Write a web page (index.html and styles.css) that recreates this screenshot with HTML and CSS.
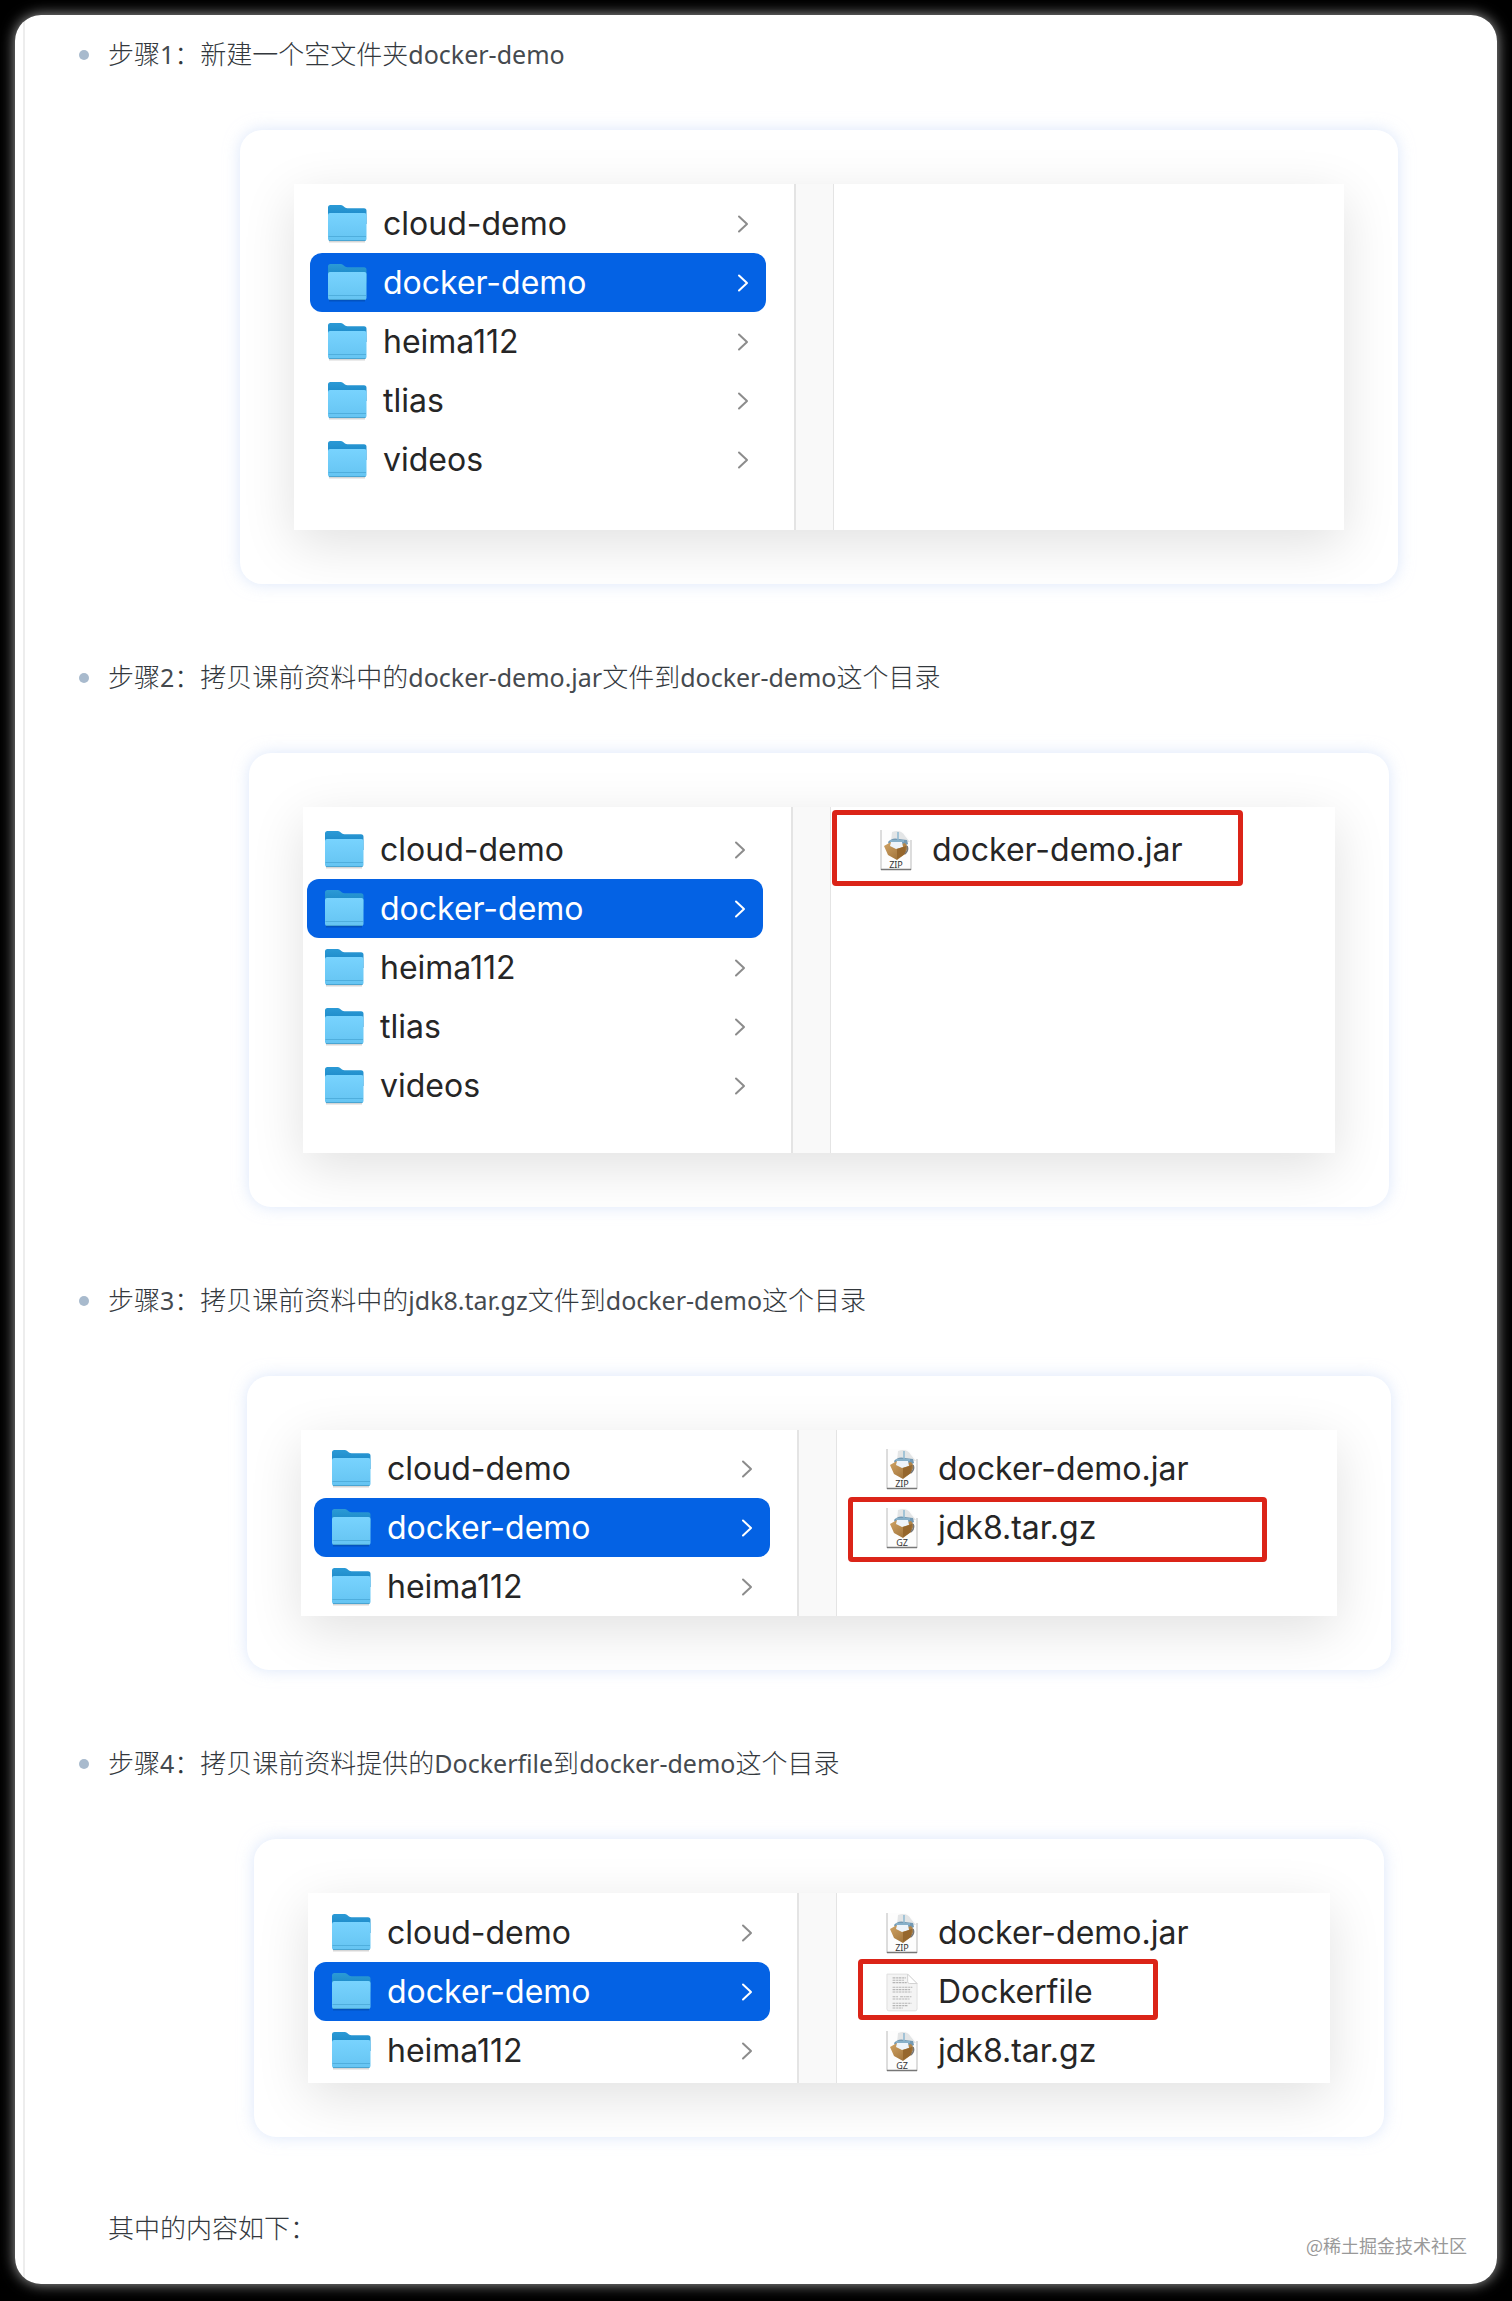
FILE: index.html
```html
<!DOCTYPE html>
<html lang="zh-CN">
<head>
<meta charset="utf-8">
<meta name="viewport" content="width=device-width, initial-scale=1">
<title>构建 docker-demo 镜像</title>
<link rel="stylesheet" href="styles.css">
</head>
<body>
<svg class="sprite" aria-hidden="true">
  <defs>
    <linearGradient id="front" x1="0" y1="0" x2="0" y2="1">
      <stop offset="0" stop-color="#78d3fe"/>
      <stop offset="1" stop-color="#65c4f2"/>
    </linearGradient>
    <linearGradient id="back" x1="0" y1="0" x2="0" y2="1">
      <stop offset="0" stop-color="#2b9ad6"/>
      <stop offset="1" stop-color="#1480c0"/>
    </linearGradient>
    <linearGradient id="box" x1="0" y1="0" x2="1" y2="1">
      <stop offset="0" stop-color="#d1a465"/>
      <stop offset="1" stop-color="#94672f"/>
    </linearGradient>
  </defs>
  <symbol id="folder" viewBox="0 0 40 40">
    <path d="M2 36h36v2.500H2z" fill="#000" opacity=".16"/>
    <path d="M1 3.500Q1 1 3.500 1h10q1.500 0 3 1.300l1.500 1.200q1 .8 2.500.8H37q2.500 0 2.500 2.500V20H1z" fill="url(#back)"/>
    <path d="M1 11q0-2 2-2h34.500q2 0 2 2v23.500q0 2.500-2.500 2.500H3.500Q1 37 1 34.500z" fill="url(#front)"/>
    <path d="M1.500 32.500h37.500" stroke="#4faedd" stroke-width="1"/>
    <path d="M2 36.500h36.500" stroke="#4aa5d2" stroke-width="1"/>
  </symbol>
  <symbol id="archive" viewBox="0 0 32 42">
    <path d="M1 1h20l10 10v30H1z" fill="#fdfdfd"/>
    <path d="M1 1v40M31 11v30" stroke="#bbb" stroke-width="1"/>
    <path d="M1 40.500h30" stroke="#777" stroke-width="1.500"/>
    <path d="M12 3q9-3 13 4l5 6H11z" fill="#e3e5e6"/>
    <path d="M8 13q4-5 11-3l8 1 1 4-6 3H10z" fill="#7399b3"/>
    <path d="M18 3v8M10 12h14" stroke="#8eb8d1" stroke-width="1.500"/>
    <path d="M4 17l7-4 5 4 9-3 3 4-3 7-8 6-9-5z" fill="url(#box)"/>
    <path d="M11 13h11l1 5-7 2-6-3z" fill="#eef4fa"/>
    <path d="M17 20v10l8-5 1-8z" fill="#96672d"/>
    <path d="M27 17q2 4-2 8" fill="none" stroke="#777" stroke-width="1.500"/>
  </symbol>
  <symbol id="document" viewBox="0 0 34 42">
    <path d="M1 2h22l10 10v27q0 2-2 2H3q-2 0-2-2z" fill="#f4f4f4" stroke="#dedede"/>
    <path d="M23 2v8q0 2 2 2h8z" fill="#fff" stroke="#d0d0d0"/>
    <path d="M7 6h14M7 8.500h12M7 11h15M7 16h21M7 18.500h19M7 21h20M7 26h6m2 0h12M7 28.500h18M7 33h20M7 35.500h16M7 38h11" stroke="#b5b5b5" stroke-width="1.200" stroke-dasharray="3 .8 2 .6"/>
  </symbol>
  <symbol id="chevron" viewBox="0 0 12 18">
    <path d="M2 1.500l8 7.500-8 7.500" fill="none" stroke="currentColor" stroke-width="2" stroke-linecap="round" stroke-linejoin="round"/>
  </symbol>
</svg>

<main class="page">
  <ul class="steps">
    <li class="step">
      <p class="caption">步骤<span class="latin">1</span>：新建一个空文件夹<span class="latin">docker-demo</span></p>
      <div class="figure">
        <div class="frame frame-create">
          <div class="finder">
            <ul class="folders">
              <li class="row"><svg class="folder"><use href="#folder"/></svg><span class="name">cloud-demo</span><svg class="chevron"><use href="#chevron"/></svg></li>
              <li class="row selected"><svg class="folder"><use href="#folder"/></svg><span class="name">docker-demo</span><svg class="chevron"><use href="#chevron"/></svg></li>
              <li class="row"><svg class="folder"><use href="#folder"/></svg><span class="name">heima112</span><svg class="chevron"><use href="#chevron"/></svg></li>
              <li class="row"><svg class="folder"><use href="#folder"/></svg><span class="name">tlias</span><svg class="chevron"><use href="#chevron"/></svg></li>
              <li class="row"><svg class="folder"><use href="#folder"/></svg><span class="name">videos</span><svg class="chevron"><use href="#chevron"/></svg></li>
            </ul>
            <div class="gutter"></div>
            <ul class="files"></ul>
          </div>
        </div>
      </div>
    </li>

    <li class="step">
      <p class="caption">步骤<span class="latin">2</span>：拷贝课前资料中的<span class="latin">docker-demo.jar</span>文件到<span class="latin">docker-demo</span>这个目录</p>
      <div class="figure">
        <div class="frame frame-jar">
          <div class="finder">
            <ul class="folders">
              <li class="row"><svg class="folder"><use href="#folder"/></svg><span class="name">cloud-demo</span><svg class="chevron"><use href="#chevron"/></svg></li>
              <li class="row selected"><svg class="folder"><use href="#folder"/></svg><span class="name">docker-demo</span><svg class="chevron"><use href="#chevron"/></svg></li>
              <li class="row"><svg class="folder"><use href="#folder"/></svg><span class="name">heima112</span><svg class="chevron"><use href="#chevron"/></svg></li>
              <li class="row"><svg class="folder"><use href="#folder"/></svg><span class="name">tlias</span><svg class="chevron"><use href="#chevron"/></svg></li>
              <li class="row"><svg class="folder"><use href="#folder"/></svg><span class="name">videos</span><svg class="chevron"><use href="#chevron"/></svg></li>
            </ul>
            <div class="gutter"></div>
            <ul class="files">
              <li class="file marked"><svg class="sheet" viewBox="0 0 32 42"><use href="#archive"/><text class="kind" x="16" y="39">ZIP</text></svg><span class="name">docker-demo.jar</span></li>
            </ul>
          </div>
        </div>
      </div>
    </li>

    <li class="step">
      <p class="caption">步骤<span class="latin">3</span>：拷贝课前资料中的<span class="latin">jdk8.tar.gz</span>文件到<span class="latin">docker-demo</span>这个目录</p>
      <div class="figure">
        <div class="frame frame-jdk">
          <div class="finder">
            <ul class="folders">
              <li class="row"><svg class="folder"><use href="#folder"/></svg><span class="name">cloud-demo</span><svg class="chevron"><use href="#chevron"/></svg></li>
              <li class="row selected"><svg class="folder"><use href="#folder"/></svg><span class="name">docker-demo</span><svg class="chevron"><use href="#chevron"/></svg></li>
              <li class="row"><svg class="folder"><use href="#folder"/></svg><span class="name">heima112</span><svg class="chevron"><use href="#chevron"/></svg></li>
            </ul>
            <div class="gutter"></div>
            <ul class="files">
              <li class="file"><svg class="sheet" viewBox="0 0 32 42"><use href="#archive"/><text class="kind" x="16" y="39">ZIP</text></svg><span class="name">docker-demo.jar</span></li>
              <li class="file marked"><svg class="sheet" viewBox="0 0 32 42"><use href="#archive"/><text class="kind" x="16" y="39">GZ</text></svg><span class="name">jdk8.tar.gz</span></li>
            </ul>
          </div>
        </div>
      </div>
    </li>

    <li class="step">
      <p class="caption">步骤<span class="latin">4</span>：拷贝课前资料提供的<span class="latin">Dockerfile</span>到<span class="latin">docker-demo</span>这个目录</p>
      <div class="figure">
        <div class="frame frame-dockerfile">
          <div class="finder">
            <ul class="folders">
              <li class="row"><svg class="folder"><use href="#folder"/></svg><span class="name">cloud-demo</span><svg class="chevron"><use href="#chevron"/></svg></li>
              <li class="row selected"><svg class="folder"><use href="#folder"/></svg><span class="name">docker-demo</span><svg class="chevron"><use href="#chevron"/></svg></li>
              <li class="row"><svg class="folder"><use href="#folder"/></svg><span class="name">heima112</span><svg class="chevron"><use href="#chevron"/></svg></li>
            </ul>
            <div class="gutter"></div>
            <ul class="files">
              <li class="file"><svg class="sheet" viewBox="0 0 32 42"><use href="#archive"/><text class="kind" x="16" y="39">ZIP</text></svg><span class="name">docker-demo.jar</span></li>
              <li class="file marked"><svg class="sheet"><use href="#document"/></svg><span class="name">Dockerfile</span></li>
              <li class="file"><svg class="sheet" viewBox="0 0 32 42"><use href="#archive"/><text class="kind" x="16" y="39">GZ</text></svg><span class="name">jdk8.tar.gz</span></li>
            </ul>
          </div>
        </div>
      </div>
      <p class="caption follow">其中的内容如下：</p>
    </li>
  </ul>
  <span class="watermark">@稀土掘金技术社区</span>
</main>
</body>
</html>
```
FILE: styles.css
```css
*,
*::before,
*::after {
  box-sizing: border-box;
}

body {
  margin: 0;
  padding: 15px;
  background: #000;
  font-family: "Noto Sans CJK SC", sans-serif;
  color: #33383d;
}

ul {
  margin: 0;
  padding: 0;
  list-style: none;
}

.sprite {
  position: absolute;
  width: 0;
  height: 0;
}

.page {
  position: relative;
  padding: 16px 0 35px 8px;
  background: linear-gradient(to right, #fff 8px, #ededed 8px, #ededed 10px, #fff 10px);
  border-radius: 26px;
  box-shadow: 0 0 14px rgba(255, 255, 255, 0.65);
}

.steps {
  display: flex;
  flex-direction: column;
  gap: 70px;
  padding-left: 85px;
}

.caption {
  position: relative;
  margin: 0;
  font-size: 26px;
  font-weight: 300;
  line-height: 44px;
}

.caption::before {
  content: "";
  position: absolute;
  left: -29px;
  top: 19px;
  width: 10px;
  height: 10px;
  border-radius: 50%;
  background: #a8bacd;
}

.caption.follow {
  margin-top: 68px;
}

.caption.follow::before {
  content: none;
}

.latin {
  font-family: "Noto Sans", sans-serif;
  font-size: 25px;
  font-weight: 400;
  line-height: 1;
  color: #454a4f;
}

.figure {
  display: flex;
  justify-content: center;
  margin: 55px 0 0 33px;
}

.frame {
  width: 100%;
  padding: 54px;
  overflow: hidden;
  border-radius: 22px;
  background: #fff;
  box-shadow: 0 0 16px rgba(190, 210, 245, 0.55);
}

.frame-create {
  max-width: 1158px;
}

.frame-jar {
  max-width: 1140px;
}

.frame-jdk {
  max-width: 1144px;
}

.frame-dockerfile {
  max-width: 1130px;
}

.finder {
  display: flex;
  background: #fff;
  box-shadow: 0 14px 50px rgba(0, 0, 0, 0.12);
  font-family: Inter, sans-serif;
  font-size: 32px;
  color: #262626;
}

.folders {
  flex: none;
  padding: 10px 27px 3px 6px;
}

.frame-create .folders {
  padding: 10px 28px 41px 16px;
}

.frame-jar .folders {
  padding: 13px 28px 38px 4px;
}

.frame-jdk .folders {
  padding: 9px 27px 0 13px;
}

.row {
  display: flex;
  align-items: center;
  gap: 16px;
  width: 456px;
  height: 59px;
  padding: 0 17px;
  border-radius: 12px;
}

.row .name {
  flex: 1;
}

.selected {
  background: #0462e4;
  color: #fff;
}

.folder {
  flex: none;
  width: 40px;
  height: 40px;
}

.chevron {
  flex: none;
  width: 12px;
  height: 18px;
  color: #8c8c8c;
}

.selected .chevron {
  color: #fff;
}

.gutter {
  flex: none;
  width: 40px;
  border-left: 2px solid #e4e4e4;
  border-right: 1px solid #e4e4e4;
  background: #f9f9f9;
}

.files {
  flex: 1;
  padding-top: 10px;
}

.frame-jar .files {
  padding-top: 13px;
}

.frame-jdk .files {
  padding-top: 9px;
}

.file {
  position: relative;
  display: flex;
  align-items: center;
  gap: 20px;
  height: 59px;
  padding-left: 49px;
}

.sheet {
  flex: none;
  width: 32px;
  height: 42px;
}

.kind {
  font-family: "Noto Sans", sans-serif;
  font-size: 9px;
  text-anchor: middle;
  fill: #333;
}

/* Red highlight drawn over the file list */
.marked::after {
  content: "";
  position: absolute;
  border: 5px solid #db2418;
  border-radius: 4px;
}

.frame-jar .marked::after {
  left: 1px;
  top: -10px;
  width: 411px;
  height: 76px;
}

.frame-jdk .marked::after {
  left: 11px;
  top: -1px;
  width: 419px;
  height: 65px;
}

.frame-dockerfile .marked::after {
  left: 21px;
  top: -3px;
  width: 300px;
  height: 61px;
}

.watermark {
  position: absolute;
  right: 30px;
  bottom: 27px;
  font-size: 18px;
  line-height: 24px;
  color: #999;
}
```
